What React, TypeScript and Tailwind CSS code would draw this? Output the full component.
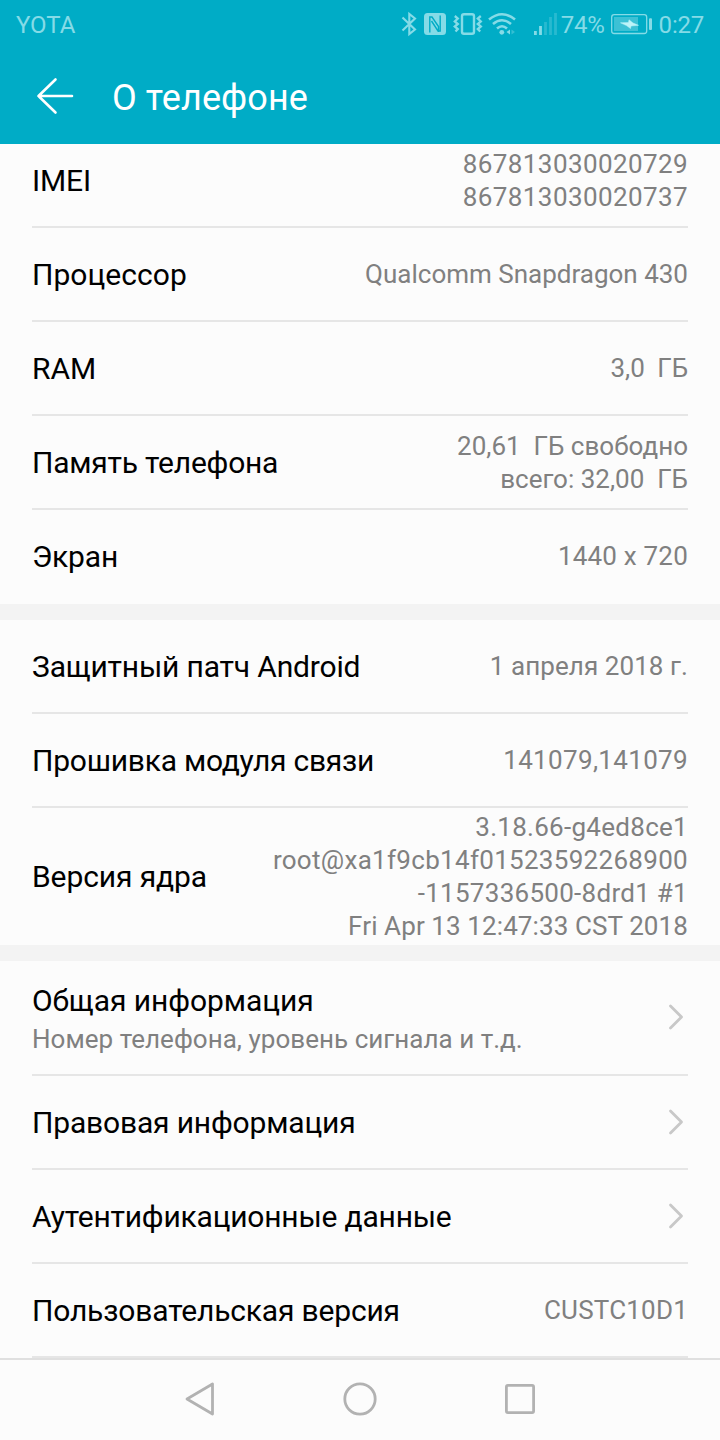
import React from "react";

type Line = { text: string; spacing: string };

type RowProps = {
    label: string;
    labelSpacing?: string;
    value?: Line[];
    last?: boolean;
};

function Row({ label, labelSpacing = "tracking-[-0.17px]", value, last }: RowProps) {
    return (
        <div className={`mx-8 flex min-h-[94px] items-center justify-between ${last ? "" : "border-b-2 border-[#e6e6e6] pt-[2px]"}`}>
            <span className={`text-[30px] leading-[36px] text-black ${labelSpacing}`}>{label}</span>
            {value ? (
                <div className={`whitespace-pre text-right text-[26px] leading-[33px] text-[#808080] ${value.length === 1 ? "pb-[2px]" : ""}`}>
                    {value.map((line) => (
                        <p key={line.text} className={line.spacing}>{line.text}</p>
                    ))}
                </div>
            ) : (
                <Chevron />
            )}
        </div>
    );
}

function Chevron() {
    return (
        <svg width="24" height="32" viewBox="0 0 24 32" fill="none" className="mb-[2px] shrink-0">
            <path d="M6.5 5 L17.5 16 L6.5 27" stroke="#c8c8c8" strokeWidth="2.8" strokeLinecap="round" strokeLinejoin="round" />
        </svg>
    );
}

function StatusBar() {
    return (
        <div className="flex h-12 items-center justify-between px-4 text-[24px] leading-[28px] text-[#85dbe7]">
            <span className="pt-[2px]">YOTA</span>
            <div className="flex w-[304px] items-center">
                <svg width="160" height="48" viewBox="400 0 160 48" fill="none" stroke="currentColor" className="shrink-0">
                    {/* Bluetooth */}
                    <path d="M402.5 17.5 L415 29.5 L409.3 34 V14 L415 18.5 L402.5 30.5" strokeWidth="2.1" />
                    {/* NFC */}
                    <rect x="424" y="13" width="22" height="22" rx="3.5" fill="currentColor" stroke="none" />
                    <path d="M429.8 32.500 V17 L432 17 L438.500 26.500 V32 M440.200 15.500 V31 H438 L431.500 21" stroke="#00acc6" strokeWidth="1.400" />
                    {/* Vibration */}
                    <rect x="462" y="14.2" width="12" height="19.6" rx="2" strokeWidth="2.4" />
                    <path d="M454.800 16 L457.800 18.500 L454.800 21.500 L457.800 24 L454.800 26.500 L457.800 29 L455.500 31.500" strokeWidth="2.3" />
                    <path d="M480.800 16 L477.800 18.500 L480.800 21.500 L477.800 24 L480.800 26.500 L477.800 29 L480.200 31.500" strokeWidth="2.3" />
                    {/* Wi-Fi */}
                    <path d="M489 19.500 Q502 9 515 19.500 M493 24 Q502 16.500 511 24 M497 28.500 Q502 24 507 28.500" strokeWidth="2.6" />
                    <circle cx="501.800" cy="32.300" r="2.400" fill="currentColor" stroke="none" />
                    <path d="M510 29.500 V34.500 L506.500 32 Z" fill="currentColor" stroke="none" />
                    <path d="M511.500 29.500 V34.500 L515 32 Z" fill="currentColor" stroke="none" opacity=".4" />
                    {/* Signal */}
                    <path d="M535.400 31 V35 M540.500 26 V35" strokeWidth="2.8" />
                    <path d="M545.500 22 V35 M550.500 17 V35 M555.500 13 V35" strokeWidth="2.8" opacity=".3" />
                </svg>
                <span className="w-[46px] shrink-0 pl-[0.8px] pt-[2px] tracking-[-0.3px]">74%</span>
                <svg width="52" height="48" viewBox="606 0 52 48" fill="none" className="shrink-0">
                    <rect x="611.7" y="14.7" width="35" height="18.800" rx="2.500" stroke="currentColor" strokeWidth="1.300" />
                    <rect x="614" y="17" width="24" height="14" fill="currentColor" opacity=".45" />
                    <path d="M620.500 22.800 L628.500 22.600 L629 19.800 L633 23 L638.500 25.300 L631 26 L630.500 28.500 L626.500 25.600 Z" fill="#bdf3f8" stroke="#bdf3f8" strokeWidth=".5" />
                    <rect x="649" y="18.300" width="3" height="11.700" rx="1" fill="currentColor" />
                </svg>
                <span className="shrink-0 pl-[0.6px] pt-[2px] tracking-[-0.2px]">0:27</span>
            </div>
        </div>
    );
}

export default function App() {
    return (
        <div className="flex h-[1440px] w-[720px] flex-col overflow-hidden bg-[#fcfcfc] font-['Roboto',sans-serif]">
            <header className="shrink-0 bg-[#00acc6]">
                <StatusBar />
                <div className="flex h-24 items-center pl-8">
                    <svg width="48" height="48" viewBox="0 0 48 48" fill="none" stroke="#fff" strokeWidth="2.6" strokeLinecap="round" strokeLinejoin="round">
                        <path d="M23.500 7.500 L6.500 24 L23.500 40.500 M6.500 24 H40" />
                    </svg>
                    <h1 className="ml-8 pt-[4px] text-[36px] leading-[42px] tracking-[0.08px] text-white">О телефоне</h1>
                </div>
            </header>

            <main className="min-h-0 flex-1 overflow-hidden">
                <section className="-mt-[10px]">
                    <Row
                        label="IMEI"
                        labelSpacing="tracking-[-0.15px]"
                        value={[
                            { text: "867813030020729", spacing: "tracking-[0.4px]" },
                            { text: "867813030020737", spacing: "tracking-[0.4px]" },
                        ]}
                    />
                    <Row
                        label="Процессор"
                        labelSpacing="tracking-[0.05px]"
                        value={[{ text: "Qualcomm Snapdragon 430", spacing: "tracking-normal" }]}
                    />
                    <Row label="RAM" labelSpacing="tracking-normal" value={[{ text: "3,0  ГБ", spacing: "tracking-[-0.1px]" }]} />
                    <Row
                        label="Память телефона"
                        labelSpacing="tracking-[-0.22px]"
                        value={[
                            { text: "20,61  ГБ свободно", spacing: "tracking-normal" },
                            { text: "всего: 32,00  ГБ", spacing: "tracking-normal" },
                        ]}
                    />
                    <Row label="Экран" value={[{ text: "1440 x 720", spacing: "tracking-[0.2px]" }]} last />
                </section>
                <div className="h-4 bg-[#f3f3f3]" />
                <section>
                    <Row label="Защитный патч Android" value={[{ text: "1 апреля 2018 г.", spacing: "tracking-[0.08px]" }]} />
                    <Row
                        label="Прошивка модуля связи"
                        labelSpacing="tracking-[-0.24px]"
                        value={[{ text: "141079,141079", spacing: "tracking-[0.33px]" }]}
                    />
                    <div className="flex h-[137px] flex-col justify-center">
                        <Row
                            label="Версия ядра"
                            labelSpacing="tracking-[-0.1px]"
                            value={[
                                { text: "3.18.66-g4ed8ce1", spacing: "tracking-[0.28px]" },
                                { text: "root@xa1f9cb14f01523592268900", spacing: "tracking-[0.3px]" },
                                { text: "-1157336500-8drd1 #1", spacing: "tracking-[0.28px]" },
                                { text: "Fri Apr 13 12:47:33 CST 2018", spacing: "tracking-[0.1px]" },
                            ]}
                            last
                        />
                    </div>
                </section>
                <div className="h-4 bg-[#f3f3f3]" />
                <section>
                    <div className="mx-8 flex h-[115px] items-center justify-between border-b-2 border-[#e6e6e6]">
                        <div className="pt-[2px]">
                            <p className="text-[30px] leading-[40px] tracking-[-0.06px] text-black">Общая информация</p>
                            <p className="text-[26px] leading-[36px] tracking-[0.03px] text-[#808080]">Номер телефона, уровень сигнала и т.д.</p>
                        </div>
                        <Chevron />
                    </div>
                    <Row label="Правовая информация" />
                    <Row label="Аутентификационные данные" labelSpacing="tracking-[-0.2px]" />
                    <Row label="Пользовательская версия" value={[{ text: "CUSTC10D1", spacing: "tracking-[0.2px]" }]} />
                </section>
            </main>

            <nav className="flex h-[82px] shrink-0 items-center justify-center gap-32 border-t-2 border-[#e0e0e0] pb-[2px]">
                <svg width="32" height="34" viewBox="0 0 32 34" fill="none" stroke="#b2b2b2" strokeWidth="2.8" strokeLinejoin="round">
                    <path d="M29.500 2 V32 L4 17 Z" />
                </svg>
                <svg width="34" height="34" viewBox="0 0 34 34" fill="none" stroke="#b2b2b2" strokeWidth="2.8">
                    <circle cx="17" cy="17" r="15.200" />
                </svg>
                <svg width="32" height="34" viewBox="0 0 32 34" fill="none" stroke="#b2b2b2" strokeWidth="2.8">
                    <rect x="1.400" y="3.400" width="27.200" height="27.200" rx="1.500" />
                </svg>
            </nav>
        </div>
    );
}
